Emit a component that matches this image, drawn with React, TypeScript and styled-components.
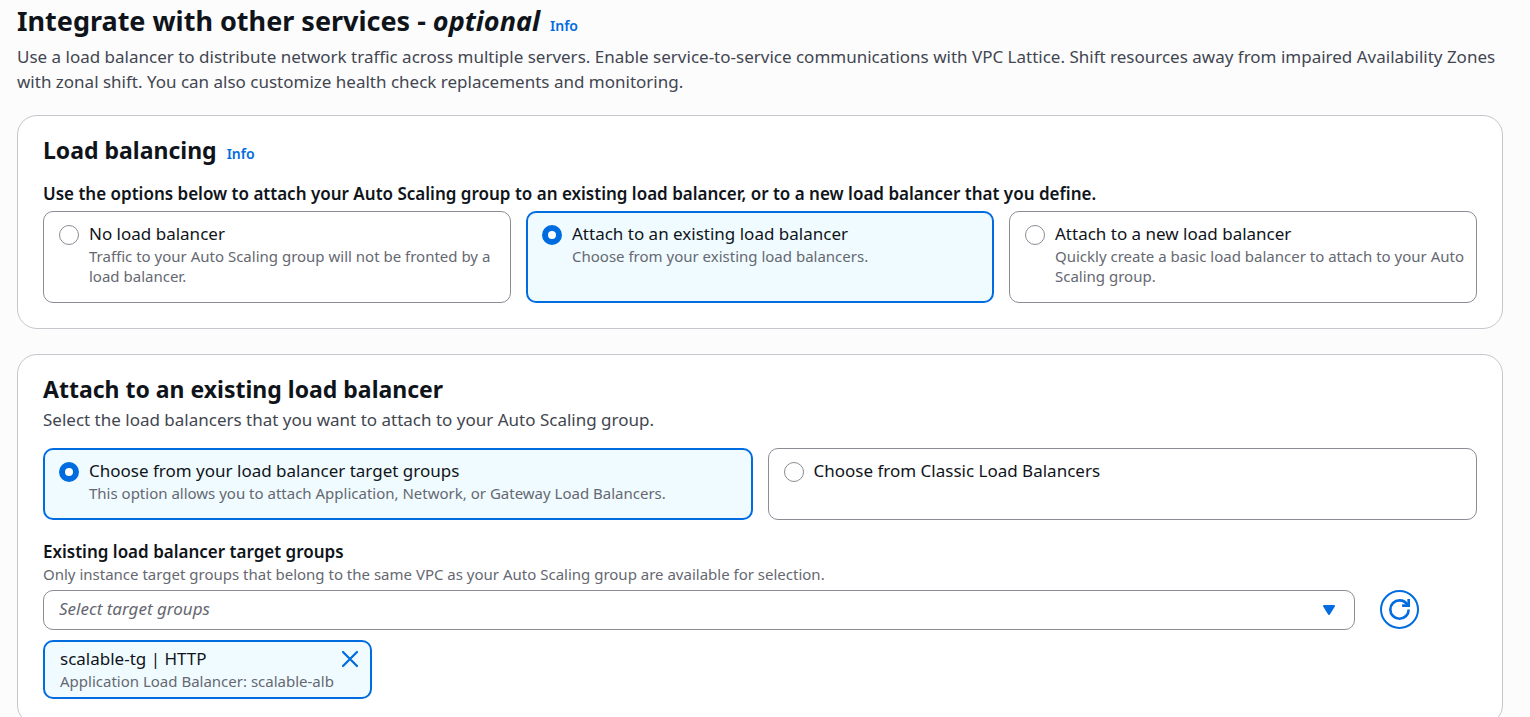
import React, { useState } from "react";
import styled, { createGlobalStyle } from "styled-components";

const color = {
  text: "#0f141a",
  secondary: "#424650",
  muted: "#656871",
  accent: "#006ce0",
  accentFill: "#f0fbff",
  cardBorder: "#c6c6cd",
  controlBorder: "#8c8c94",
};

const GlobalStyle = createGlobalStyle`
  *, *::before, *::after { box-sizing: border-box; }
  html { scrollbar-width: none; }
  body {
    margin: 0;
    background: #fcfcfd;
    color: ${color.text};
    font-family: "Noto Sans", "Open Sans", sans-serif;
    font-size: 17px;
    line-height: 25px;
  }
`;

const Page = styled.main`
  display: flex;
  flex-direction: column;
  gap: 21px;
  padding: 1px 27px 25px 17px;
`;

const PageHeader = styled.header`
  display: flex;
  flex-direction: column;
  gap: 3px;
`;

const Cards = styled.div`
  display: flex;
  flex-direction: column;
  gap: 25px;
`;

const TitleRow = styled.div`
  display: flex;
  align-items: baseline;
  gap: 10px;
`;

const PageTitle = styled.h1`
  margin: 0;
  font-size: 27px;
  line-height: 40px;
  font-weight: 700;
`;

const InfoLink = styled.a`
  color: ${color.accent};
  font-size: 14px;
  line-height: 20px;
  font-weight: 600;
  text-decoration: none;
`;

const Description = styled.p`
  margin: 0;
  color: ${color.secondary};
`;

const Card = styled.section`
  padding: 19px 25px 25px;
  border: 1px solid ${color.cardBorder};
  border-radius: 20px;
  background: #fff;
`;

const CardHeader = styled.div`
  display: flex;
  flex-direction: column;
  gap: 3px;
  margin-bottom: 16px;
`;

const CardTitle = styled.h2`
  margin: 0;
  font-size: 23px;
  line-height: 30px;
  font-weight: 700;
`;

const FieldGroup = styled.fieldset`
  min-width: 0;
  margin: 0;
  padding: 0;
  border: 0;
`;

const Legend = styled.legend`
  padding: 0;
  margin-bottom: 5px;
  font-weight: 600;
`;

const Tiles = styled.div<{ $columns: number }>`
  display: grid;
  grid-template-columns: repeat(${(p) => p.$columns}, minmax(0, 1fr));
  gap: 15px;
`;

const Tile = styled.label<{ $selected: boolean }>`
  display: flex;
  gap: 10px;
  padding: ${(p) => (p.$selected ? "8px 9px 15px 14px" : "9px 10px 16px 15px")};
  border: ${(p) => (p.$selected ? `2px solid ${color.accent}` : `1px solid ${color.controlBorder}`)};
  border-radius: 10px;
  background: ${(p) => (p.$selected ? color.accentFill : "#fff")};
  cursor: pointer;
`;

const Radio = styled.input`
  appearance: none;
  flex: none;
  width: 20px;
  height: 20px;
  margin: 4px 0 0;
  border: 1px solid ${color.controlBorder};
  border-radius: 50%;
  background: #fff;

  &:checked {
    border: 6px solid ${color.accent};
  }
`;

const TileText = styled.span`
  display: flex;
  flex-direction: column;
`;

const Hint = styled.span`
  display: block;
  color: ${color.muted};
  font-size: 15px;
  line-height: 20px;
`;

const TargetField = styled.div`
  margin-top: 19px;
`;

const FieldLabel = styled.label`
  display: block;
  font-weight: 600;
`;

const SelectRow = styled.div`
  display: grid;
  grid-template-columns: repeat(12, minmax(0, 1fr));
  gap: 25px;
  margin-top: 6px;
`;

const SelectBox = styled.div`
  position: relative;
  grid-column: span 11;

  svg {
    position: absolute;
    top: 14px;
    right: 19px;
    pointer-events: none;
  }
`;

const Select = styled.select`
  appearance: none;
  display: block;
  width: 100%;
  height: 40px;
  padding: 0 45px 3px 15px;
  border: 1px solid ${color.controlBorder};
  border-radius: 10px;
  background: #fff;
  color: ${color.muted};
  font: inherit;
  font-style: italic;
`;

const RefreshButton = styled.button`
  display: grid;
  place-items: center;
  width: 39px;
  height: 39px;
  padding: 0;
  border: 2px solid ${color.accent};
  border-radius: 50%;
  background: #fff;
  color: ${color.accent};
`;

const Token = styled.div`
  display: flex;
  justify-content: space-between;
  align-items: flex-start;
  width: 329px;
  margin-top: 10px;
  padding: 4px 10px 6px 15px;
  border: 2px solid ${color.accent};
  border-radius: 10px;
  background: ${color.accentFill};
`;

const RemoveButton = styled.button`
  display: grid;
  place-items: center;
  width: 20px;
  height: 26px;
  padding: 0;
  border: 0;
  background: none;
  color: ${color.accent};
`;

type Option = { value: string; title: string; hint?: string };

const balancingOptions: Option[] = [
  {
    value: "none",
    title: "No load balancer",
    hint: "Traffic to your Auto Scaling group will not be fronted by a load balancer.",
  },
  {
    value: "existing",
    title: "Attach to an existing load balancer",
    hint: "Choose from your existing load balancers.",
  },
  {
    value: "new",
    title: "Attach to a new load balancer",
    hint: "Quickly create a basic load balancer to attach to your Auto Scaling group.",
  },
];

const sourceOptions: Option[] = [
  {
    value: "target-groups",
    title: "Choose from your load balancer target groups",
    hint: "This option allows you to attach Application, Network, or Gateway Load Balancers.",
  },
  { value: "classic", title: "Choose from Classic Load Balancers" },
];

function TileGroup({ name, options, initial }: { name: string; options: Option[]; initial: string }) {
  const [value, setValue] = useState(initial);
  return (
    <Tiles $columns={options.length}>
      {options.map((option) => (
        <Tile key={option.value} $selected={option.value === value}>
          <Radio
            type="radio"
            name={name}
            checked={option.value === value}
            onChange={() => setValue(option.value)}
          />
          <TileText>
            <span>{option.title}</span>
            {option.hint && <Hint>{option.hint}</Hint>}
          </TileText>
        </Tile>
      ))}
    </Tiles>
  );
}

export default function App() {
  return (
    <>
      <GlobalStyle />
      <Page>
        <PageHeader>
          <TitleRow>
            <PageTitle>
              Integrate with other services - <em>optional</em>
            </PageTitle>
            <InfoLink href="#services">Info</InfoLink>
          </TitleRow>
          <Description>
            Use a load balancer to distribute network traffic across multiple servers. Enable service-to-service
            communications with VPC Lattice. Shift resources away from impaired Availability Zones with zonal shift.
            You can also customize health check replacements and monitoring.
          </Description>
        </PageHeader>

        <Cards>
          <Card>
            <CardHeader>
              <TitleRow>
                <CardTitle>Load balancing</CardTitle>
                <InfoLink href="#load-balancing">Info</InfoLink>
              </TitleRow>
            </CardHeader>
            <FieldGroup>
              <Legend>
                Use the options below to attach your Auto Scaling group to an existing load balancer, or to a new load
                balancer that you define.
              </Legend>
              <TileGroup name="balancing" options={balancingOptions} initial="existing" />
            </FieldGroup>
          </Card>

          <Card>
            <CardHeader>
              <CardTitle>Attach to an existing load balancer</CardTitle>
              <Description>Select the load balancers that you want to attach to your Auto Scaling group.</Description>
            </CardHeader>
            <TileGroup name="source" options={sourceOptions} initial="target-groups" />
            <TargetField>
              <FieldLabel htmlFor="target-groups">Existing load balancer target groups</FieldLabel>
              <Hint>
                Only instance target groups that belong to the same VPC as your Auto Scaling group are available for
                selection.
              </Hint>
              <SelectRow>
                <SelectBox>
                  <Select id="target-groups" defaultValue="">
                    <option value="">Select target groups</option>
                  </Select>
                  <svg width="14" height="12" viewBox="0 0 14 12" aria-hidden="true">
                    <path
                      d="M2 2h10L7 10z"
                      fill={color.accent}
                      stroke={color.accent}
                      strokeWidth="2"
                      strokeLinejoin="round"
                    />
                  </svg>
                </SelectBox>
                <RefreshButton type="button" aria-label="Refresh target groups">
                  <svg
                    width="21"
                    height="21"
                    viewBox="0 0 16 16"
                    fill="none"
                    stroke="currentColor"
                    strokeWidth="2"
                    aria-hidden="true"
                  >
                    <path d="M15 8c0 3.87-3.13 7-7 7s-7-3.13-7-7 3.13-7 7-7c2.79 0 5.2 1.63 6.33 4" />
                    <path d="M10 5h5V0" />
                  </svg>
                </RefreshButton>
              </SelectRow>
              <Token>
                <div>
                  <span>scalable-tg | HTTP</span>
                  <Hint>Application Load Balancer: scalable-alb</Hint>
                </div>
                <RemoveButton type="button" aria-label="Remove scalable-tg">
                  <svg
                    width="18"
                    height="18"
                    viewBox="0 0 18 18"
                    fill="none"
                    stroke="currentColor"
                    strokeWidth="2.25"
                    strokeLinecap="round"
                    aria-hidden="true"
                  >
                    <path d="M2 2l14 14M16 2L2 16" />
                  </svg>
                </RemoveButton>
              </Token>
            </TargetField>
          </Card>
        </Cards>
      </Page>
    </>
  );
}
